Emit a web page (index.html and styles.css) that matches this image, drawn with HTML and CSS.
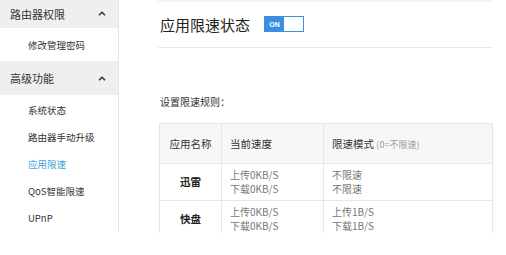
FILE: index.html
```html
<!DOCTYPE html>
<html lang="zh">
<head>
<meta charset="utf-8">
<link rel="stylesheet" href="styles.css">
</head>
<body>
<div class="page">
  <aside class="sidebar">
    <div class="group-head"><span>路由器权限</span>
      <svg class="chev" width="8" height="5" viewBox="0 0 8 5"><path d="M1 4.2 L4 1.2 L7 4.2" fill="none" stroke="#333" stroke-width="1.5"/></svg>
    </div>
    <div class="group-items one">
      <div class="item">修改管理密码</div>
    </div>
    <div class="group-head"><span>高级功能</span>
      <svg class="chev" width="8" height="5" viewBox="0 0 8 5"><path d="M1 4.2 L4 1.2 L7 4.2" fill="none" stroke="#333" stroke-width="1.5"/></svg>
    </div>
    <div class="group-items">
      <div class="item">系统状态</div>
      <div class="item">路由器手动升级</div>
      <div class="item active">应用限速</div>
      <div class="item">QoS智能限速</div>
      <div class="item">UPnP</div>
    </div>
  </aside>
  <main class="main">
    <div class="title-row">
      <h1 class="title">应用限速状态</h1>
      <div class="toggle"><span class="on">ON</span><span class="off"></span></div>
    </div>
    <div class="rules-label">设置限速规则：</div>
    <div class="table-wrap">
      <table class="rules">
        <thead>
          <tr><th class="c1">应用名称</th><th class="c2">当前速度</th><th class="c3">限速模式 <span class="hint">(0=不限速)</span></th></tr>
        </thead>
        <tbody>
          <tr><td class="c1 app">迅雷</td><td class="c2">上传0KB/S<br>下载0KB/S</td><td class="c3">不限速<br>不限速</td></tr>
          <tr><td class="c1 app">快盘</td><td class="c2">上传0KB/S<br>下载0KB/S</td><td class="c3">上传1B/S<br>下载1B/S</td></tr>
        </tbody>
      </table>
    </div>
  </main>
</div>
</body>
</html>
```
FILE: styles.css
```css
* { box-sizing: border-box; margin: 0; padding: 0; }
body {
  background: #fff;
  font-family: "Noto Sans CJK SC", "Noto Sans", sans-serif;
  color: #333;
  width: 506px;
  height: 255px;
  overflow: hidden;
}
.page { display: flex; align-items: flex-start; }
.sidebar {
  width: 119px;
  height: 232px;
  border-right: 1px solid #e6e6e6;
  display: flex;
  flex-direction: column;
}
.group-head {
  background: #efefef;
  display: flex;
  align-items: center;
  justify-content: space-between;
  padding: 0 12px 0 10px;
  font-size: 11px;
  color: #333;
}
.group-head:first-child { height: 28px; }
.group-head:nth-child(3) { height: 34px; }
.group-items { display: flex; flex-direction: column; padding: 2px 0 0; }
.group-items.one { height: 34px; justify-content: center; padding: 0; }
.item {
  font-size: 9.5px;
  padding-left: 28px;
  height: 27px;
  line-height: 27px;
  color: #333;
}
.group-items.one .item { height: auto; line-height: 14px; }
.item.active { color: #45a1d9; }
.main {
  margin-left: 39px;
  width: 335px;
  border-top: 2px solid #f4f4f4;
}
.title-row {
  display: flex;
  align-items: center;
  height: 46px;
  border-bottom: 1px solid #e8e8e8;
  padding-left: 2px;
}
.title { font-size: 15px; font-weight: 400; color: #222; margin-right: 14px; }
.toggle {
  display: flex;
  width: 40px;
  height: 16px;
  border: 1.5px solid #3b8fe0;
  margin-top: -1px;
}
.toggle .on {
  width: 19px;
  background: #3b8fe0;
  color: #fff;
  font-size: 7px;
  font-family: "Liberation Sans", sans-serif;
  font-weight: 700;
  display: flex;
  align-items: center;
  justify-content: center;
}
.toggle .off { flex: 1; background: #fff; }
.rules-label {
  font-size: 10px;
  color: #333;
  margin-top: 47px;
  padding-left: 2px;
  height: 14px;
  line-height: 14px;
}
.table-wrap { margin-top: 14px; margin-left: 1px; height: 110px; overflow: hidden; }
.rules {
  border-collapse: collapse;
  width: 334px;
  font-size: 10px;
}
.rules th, .rules td { border: 1px solid #e6e6e6; text-align: left; font-weight: 400; }
.rules thead tr { background: #f7f7f7; height: 40px; }
.rules th { font-size: 10.5px; color: #333; padding: 0 8px; }
.rules th.c1 { text-align: center; }
.rules td { color: #777; line-height: 14px; padding: 4px 8px; height: 37px; }
.rules .c1 { width: 62px; }
.rules .c2 { width: 102px; }
.rules td.app { text-align: center; font-weight: 700; color: #222; font-size: 10.5px; }
.rules .hint { font-size: 9px; color: #999; }
```
